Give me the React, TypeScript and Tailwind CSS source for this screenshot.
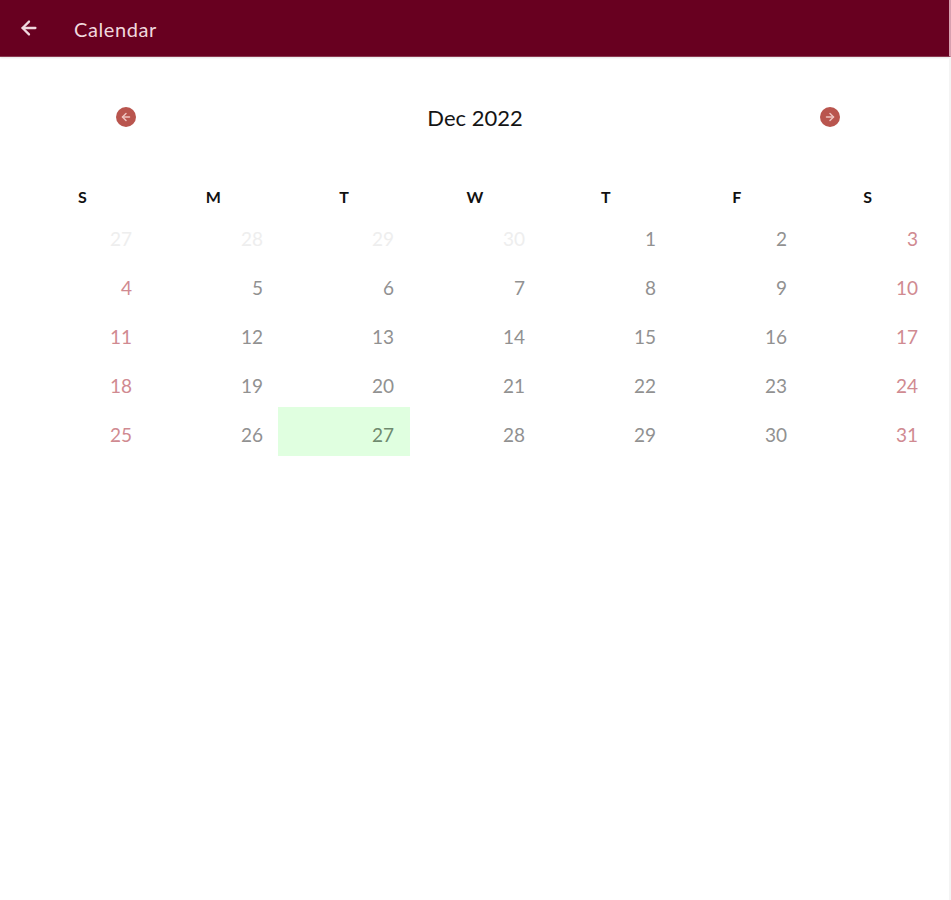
import { ArrowLeft, ArrowRight } from "lucide-react";

const days = ["S", "M", "T", "W", "T", "F", "S"];

const cells = [
  ...[27, 28, 29, 30].map((d) => ({ d, muted: true })),
  ...Array.from({ length: 31 }, (_, i) => ({ d: i + 1, muted: false })),
];

function NavButton({ right }: { right?: boolean }) {
  const Icon = right ? ArrowRight : ArrowLeft;
  return (
    <div className="flex size-[20px] items-center justify-center rounded-full bg-[#b9554e]">
      <Icon className="size-[12px] text-[#eec4c0]" strokeWidth={3} />
    </div>
  );
}

export default function App() {
  return (
    <div className="min-h-[900px] bg-white font-['Lato',sans-serif]">
      <header className="flex h-[57px] items-center border-b border-b-[#8a3a50] border-r-2 border-r-[#d9a0b0] bg-[#680020] pl-[18px] pt-[2px] text-[#f0d8de] shadow-[0_1px_2px_rgba(0,0,0,0.1)]">
        <ArrowLeft className="mb-[2px] size-[22px]" strokeWidth={2.5} />
        <span className="ml-[34px] text-[20px] tracking-[0.6px]">Calendar</span>
      </header>

      <div className="min-h-[843px] border-r-2 border-r-[#f4f4f4] pl-[16px] pr-[16px]">
        <div className="flex items-center justify-between pt-[49px] pl-[100px] pr-[93px]">
          <NavButton />
          <span className="relative top-[1px] right-[3px] text-[22px] leading-[22px] text-[#141414]">Dec 2022</span>
          <NavButton right />
        </div>

        <div className="mt-[60px] grid grid-cols-7 pl-[1px] text-center text-[16px] leading-[18px] font-bold text-[#111]">
          {days.map((day, i) => (
            <div key={i}>{day}</div>
          ))}
        </div>

        <div className="mt-[5px] grid grid-cols-7 text-right text-[19px]">
          {cells.map((cell, i) => {
            const weekend = i % 7 === 0 || i % 7 === 6;
            const today = !cell.muted && cell.d === 27;
            let color = "text-[#919191]";
            if (cell.muted) color = "text-[#eeeeee]";
            else if (today) color = "text-[#6f8a6f]";
            else if (weekend) color = "text-[#d08a91]";
            return (
              <div
                key={i}
                className={`flex h-[49px] items-center justify-end pt-[7px] ${color} ${today ? "mr-[-1px] bg-[#e0ffe0] pr-[16px]" : "pr-[15px]"}`}
              >
                {cell.d}
              </div>
            );
          })}
        </div>
      </div>
    </div>
  );
}
